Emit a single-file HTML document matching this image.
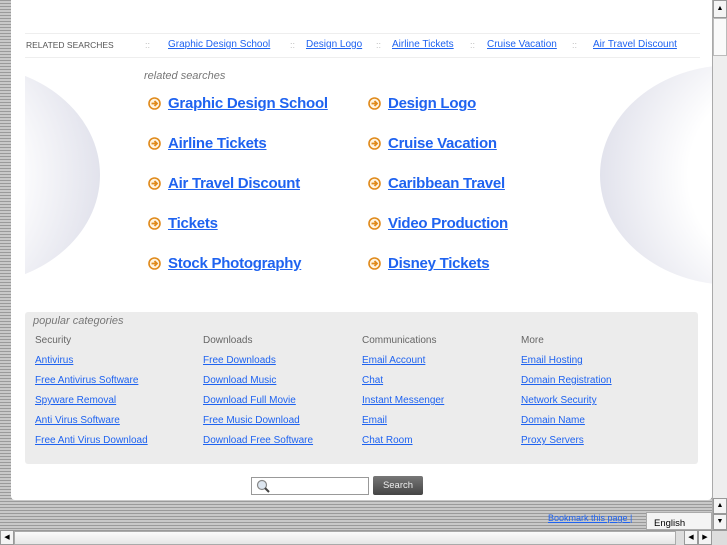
<!DOCTYPE html>
<html><head><meta charset="utf-8"><style>
*{margin:0;padding:0;box-sizing:border-box}
body{width:727px;height:545px;overflow:hidden;position:relative;font-family:"Liberation Sans",sans-serif;background:repeating-linear-gradient(#9a9a9a 0 1px,#c8c8c8 1px 3px)}
.panel{position:absolute;left:11px;top:0;width:701px;height:500px;background:#fff;border-radius:0 0 4px 4px}
a{color:#1f63f0;text-decoration:underline}
.abs{position:absolute;white-space:nowrap}
.top{font-size:10px;top:39px}
.sep{color:#bbb;font-size:9px}
.big{font-size:15px;font-weight:bold;letter-spacing:-0.25px}
.arr{position:absolute;width:13px;height:13px}
.cat{font-size:10px}
.hd{color:#666;font-size:10px}
</style></head><body>
<svg width="0" height="0" style="position:absolute"><defs><symbol id="ar" viewBox="0 0 13 13"><circle cx="6.5" cy="6.5" r="5.5" fill="#fff4e0" stroke="#e08a1c" stroke-width="1.6"/><path d="M3.5 6.5h5M6.5 4l2.5 2.5-2.5 2.5" fill="none" stroke="#e08a1c" stroke-width="1.8"/></symbol></defs></svg>
<div class="panel"></div>
<div class="abs" style="left:25px;top:33px;width:675px;border-top:1px solid #eee"></div>
<div class="abs" style="left:25px;top:57px;width:675px;border-top:1px solid #eee"></div>
<div class="abs top" style="left:26px;color:#555;font-size:8.5px;top:40px">RELATED SEARCHES</div>
<span class="abs sep" style="left:145px;top:40px">::</span><a class="abs top" style="left:168px">Graphic Design School</a>
<span class="abs sep" style="left:290px;top:40px">::</span><a class="abs top" style="left:306px">Design Logo</a>
<span class="abs sep" style="left:376px;top:40px">::</span><a class="abs top" style="left:392px">Airline Tickets</a>
<span class="abs sep" style="left:470px;top:40px">::</span><a class="abs top" style="left:487px">Cruise Vacation</a>
<span class="abs sep" style="left:572px;top:40px">::</span><a class="abs top" style="left:593px">Air Travel Discount</a>
<div class="abs" style="left:25px;top:65px;width:75px;height:220px;overflow:hidden"><div style="position:absolute;left:-190px;top:0;width:265px;height:220px;border-radius:50%;background:radial-gradient(circle at 30% 50%,#fff 45%,#d8d9e6 100%)"></div></div>
<div class="abs" style="left:600px;top:65px;width:112px;height:220px;overflow:hidden"><div style="position:absolute;left:0;top:0;width:265px;height:220px;border-radius:50%;background:radial-gradient(circle at 70% 50%,#fff 45%,#d8d9e6 100%)"></div></div>
<div class="abs" style="left:144px;top:70px;font-size:11px;font-style:italic;color:#777">related searches</div>
<svg class="arr" style="left:148px;top:97px"><use href="#ar"/></svg><a class="abs big" style="left:168px;top:95px">Graphic Design School</a>
<svg class="arr" style="left:368px;top:97px"><use href="#ar"/></svg><a class="abs big" style="left:388px;top:95px">Design Logo</a>
<svg class="arr" style="left:148px;top:137px"><use href="#ar"/></svg><a class="abs big" style="left:168px;top:135px">Airline Tickets</a>
<svg class="arr" style="left:368px;top:137px"><use href="#ar"/></svg><a class="abs big" style="left:388px;top:135px">Cruise Vacation</a>
<svg class="arr" style="left:148px;top:177px"><use href="#ar"/></svg><a class="abs big" style="left:168px;top:175px">Air Travel Discount</a>
<svg class="arr" style="left:368px;top:177px"><use href="#ar"/></svg><a class="abs big" style="left:388px;top:175px">Caribbean Travel</a>
<svg class="arr" style="left:148px;top:217px"><use href="#ar"/></svg><a class="abs big" style="left:168px;top:215px">Tickets</a>
<svg class="arr" style="left:368px;top:217px"><use href="#ar"/></svg><a class="abs big" style="left:388px;top:215px">Video Production</a>
<svg class="arr" style="left:148px;top:257px"><use href="#ar"/></svg><a class="abs big" style="left:168px;top:255px">Stock Photography</a>
<svg class="arr" style="left:368px;top:257px"><use href="#ar"/></svg><a class="abs big" style="left:388px;top:255px">Disney Tickets</a>
<div class="abs" style="left:25px;top:312px;width:673px;height:152px;background:#ececec;border-radius:3px"></div>
<div class="abs" style="left:33px;top:315px;font-size:11px;font-style:italic;color:#777">popular categories</div>
<div class="abs hd" style="left:35px;top:335px">Security</div>
<div class="abs hd" style="left:203px;top:335px">Downloads</div>
<div class="abs hd" style="left:362px;top:335px">Communications</div>
<div class="abs hd" style="left:521px;top:335px">More</div>
<a class="abs cat" style="left:35px;top:355px">Antivirus</a><a class="abs cat" style="left:203px;top:355px">Free Downloads</a><a class="abs cat" style="left:362px;top:355px">Email Account</a><a class="abs cat" style="left:521px;top:355px">Email Hosting</a>
<a class="abs cat" style="left:35px;top:375px">Free Antivirus Software</a><a class="abs cat" style="left:203px;top:375px">Download Music</a><a class="abs cat" style="left:362px;top:375px">Chat</a><a class="abs cat" style="left:521px;top:375px">Domain Registration</a>
<a class="abs cat" style="left:35px;top:395px">Spyware Removal</a><a class="abs cat" style="left:203px;top:395px">Download Full Movie</a><a class="abs cat" style="left:362px;top:395px">Instant Messenger</a><a class="abs cat" style="left:521px;top:395px">Network Security</a>
<a class="abs cat" style="left:35px;top:415px">Anti Virus Software</a><a class="abs cat" style="left:203px;top:415px">Free Music Download</a><a class="abs cat" style="left:362px;top:415px">Email</a><a class="abs cat" style="left:521px;top:415px">Domain Name</a>
<a class="abs cat" style="left:35px;top:435px">Free Anti Virus Download</a><a class="abs cat" style="left:203px;top:435px">Download Free Software</a><a class="abs cat" style="left:362px;top:435px">Chat Room</a><a class="abs cat" style="left:521px;top:435px">Proxy Servers</a>
<div class="abs" style="left:251px;top:477px;width:118px;height:18px;border:1px solid #999;background:#fff"><svg width="16" height="16" style="position:absolute;left:3px;top:0"><circle cx="7" cy="7" r="4.5" fill="#dde6f0" stroke="#888" stroke-width="1.2"/><path d="M10 10l4 4" stroke="#444" stroke-width="2"/></svg></div>
<div class="abs" style="left:373px;top:476px;width:50px;height:19px;background:linear-gradient(#777,#444);border-radius:2px;color:#eee;font-size:9.5px;text-align:center;line-height:19px">Search</div>
<div class="abs" style="left:712px;top:0;width:15px;height:530px;background:#eee;border-left:1px solid #aaa"></div>
<div class="abs" style="left:713px;top:0;width:14px;height:18px;background:#f4f4f4;border:1px solid #999;font-size:7px;text-align:center;line-height:16px">▲</div>
<div class="abs" style="left:713px;top:18px;width:14px;height:38px;background:#fafafa;border:1px solid #bbb"></div>
<div class="abs" style="left:713px;top:498px;width:14px;height:16px;background:#f4f4f4;border:1px solid #999;font-size:7px;text-align:center;line-height:14px">▲</div>
<div class="abs" style="left:713px;top:514px;width:14px;height:16px;background:#f4f4f4;border:1px solid #999;font-size:7px;text-align:center;line-height:14px">▼</div>
<a class="abs" style="left:548px;top:513px;font-size:9px">Bookmark this page |</a>
<div class="abs" style="left:646px;top:512px;width:66px;height:18px;background:#f4f4f4;border:1px solid #aaa;font-size:9.5px;padding:5px 0 0 7px">English</div>
<div class="abs" style="left:0;top:530px;width:727px;height:15px;background:#ddd;border-top:1px solid #999"></div>
<div class="abs" style="left:0;top:530px;width:14px;height:15px;background:#f4f4f4;border:1px solid #999;font-size:7px;text-align:center;line-height:13px">◀</div>
<div class="abs" style="left:14px;top:531px;width:662px;height:14px;background:linear-gradient(#fafafa,#e6e6e6);border:1px solid #aaa"></div>
<div class="abs" style="left:684px;top:530px;width:14px;height:15px;background:#f4f4f4;border:1px solid #999;font-size:7px;text-align:center;line-height:13px">◀</div>
<div class="abs" style="left:698px;top:530px;width:14px;height:15px;background:#f4f4f4;border:1px solid #999;font-size:7px;text-align:center;line-height:13px">▶</div>
</body></html>
